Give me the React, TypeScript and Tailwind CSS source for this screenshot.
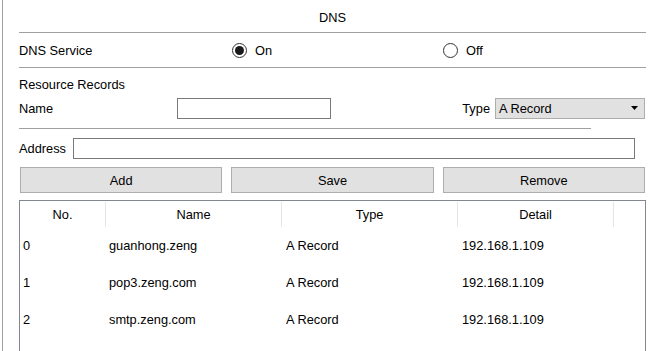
import { useState } from "react";

const records = [
  { no: 0, name: "guanhong.zeng", type: "A Record", detail: "192.168.1.109" },
  { no: 1, name: "pop3.zeng.com", type: "A Record", detail: "192.168.1.109" },
  { no: 2, name: "smtp.zeng.com", type: "A Record", detail: "192.168.1.109" },
];

function Radio({ checked, label, onClick }: { checked: boolean; label: string; onClick: () => void }) {
  return (
    <button onClick={onClick} className="flex items-center gap-[8px] bg-transparent">
      <span className="w-[15px] h-[15px] rounded-full border border-[#333] bg-white flex items-center justify-center">
        {checked && <span className="w-[9px] h-[9px] rounded-full bg-[#1a1a1a]" />}
      </span>
      <span>{label}</span>
    </button>
  );
}

export default function App() {
  const [enabled, setEnabled] = useState(true);

  return (
    <div
      className="w-[657px] h-[351px] overflow-hidden bg-white text-[12.8px] leading-[15px] text-black"
      style={{ fontFamily: '"Liberation Sans", Arial, sans-serif' }}
    >
      <div className="ml-[2px] h-full border-l border-[#a0a0a0] pl-[16px] pr-[11px]">
        {/* Title */}
        <div className="h-[33px] flex items-center justify-center pt-[2px] border-b border-[#a0a0a0]">DNS</div>

        {/* Service toggle */}
        <div className="h-[35px] grid grid-cols-3 gap-[9px] items-center pt-[1px] border-b border-[#a0a0a0]">
          <span>DNS Service</span>
          <div className="pl-[1px]">
            <Radio checked={enabled} label="On" onClick={() => setEnabled(true)} />
          </div>
          <div>
            <Radio checked={!enabled} label="Off" onClick={() => setEnabled(false)} />
          </div>
        </div>

        {/* Resource records */}
        <div className="pt-[9px]">Resource Records</div>
        <div className="pt-[6px] pb-[9px] border-b border-[#a0a0a0] w-[572px]">
          <div className="h-[21px] w-[626px] flex items-center">
            <span className="w-[158px]">Name</span>
            <input className="w-[154px] h-[21px] border border-[#7a7a7a] bg-white outline-none px-1" />
            <span className="ml-auto mr-[5px]">Type</span>
            <div className="w-[150px] h-[21px] border border-[#adadad] bg-[#e1e1e1] flex items-center pl-[3px] pr-[5px]">
              <span>A Record</span>
              <svg className="ml-auto" width="8" height="5" viewBox="0 0 8 5">
                <path d="M0 0h7L3.5 4z" fill="#000" />
              </svg>
            </div>
          </div>
        </div>

        <div className="h-[21px] mt-[9px] flex items-center">
          <span className="w-[54px]">Address</span>
          <input className="w-[562px] h-[21px] border border-[#7a7a7a] bg-white outline-none px-1" />
        </div>

        {/* Actions */}
        <div className="mt-[8px] grid grid-cols-3 gap-[9px] pl-[1px] pr-[1px]">
          {["Add", "Save", "Remove"].map((b) => (
            <button key={b} className="h-[26px] border border-[#adadad] bg-[#e1e1e1]">
              {b}
            </button>
          ))}
        </div>

        {/* Records table */}
        <div className="mt-[7px] h-[200px] border border-[#828790] bg-white">
          <div className="flex h-[26px] pt-[1px]">
            <div className="w-[86px] flex items-center justify-center border-r border-[#e5e5e5]">No.</div>
            <div className="w-[176px] flex items-center justify-center border-r border-[#e5e5e5]">Name</div>
            <div className="w-[176px] flex items-center justify-center border-r border-[#e5e5e5]">Type</div>
            <div className="w-[156px] flex items-center justify-center border-r border-[#e5e5e5]">Detail</div>
          </div>
          {records.map((r) => (
            <div key={r.no} className="flex h-[37px] items-center">
              <div className="w-[86px] pl-[3px]">{r.no}</div>
              <div className="w-[176px] pl-[3px]">{r.name}</div>
              <div className="w-[176px] pl-[4px]">{r.type}</div>
              <div className="w-[156px] pl-[4px]">{r.detail}</div>
            </div>
          ))}
        </div>
      </div>
    </div>
  );
}
